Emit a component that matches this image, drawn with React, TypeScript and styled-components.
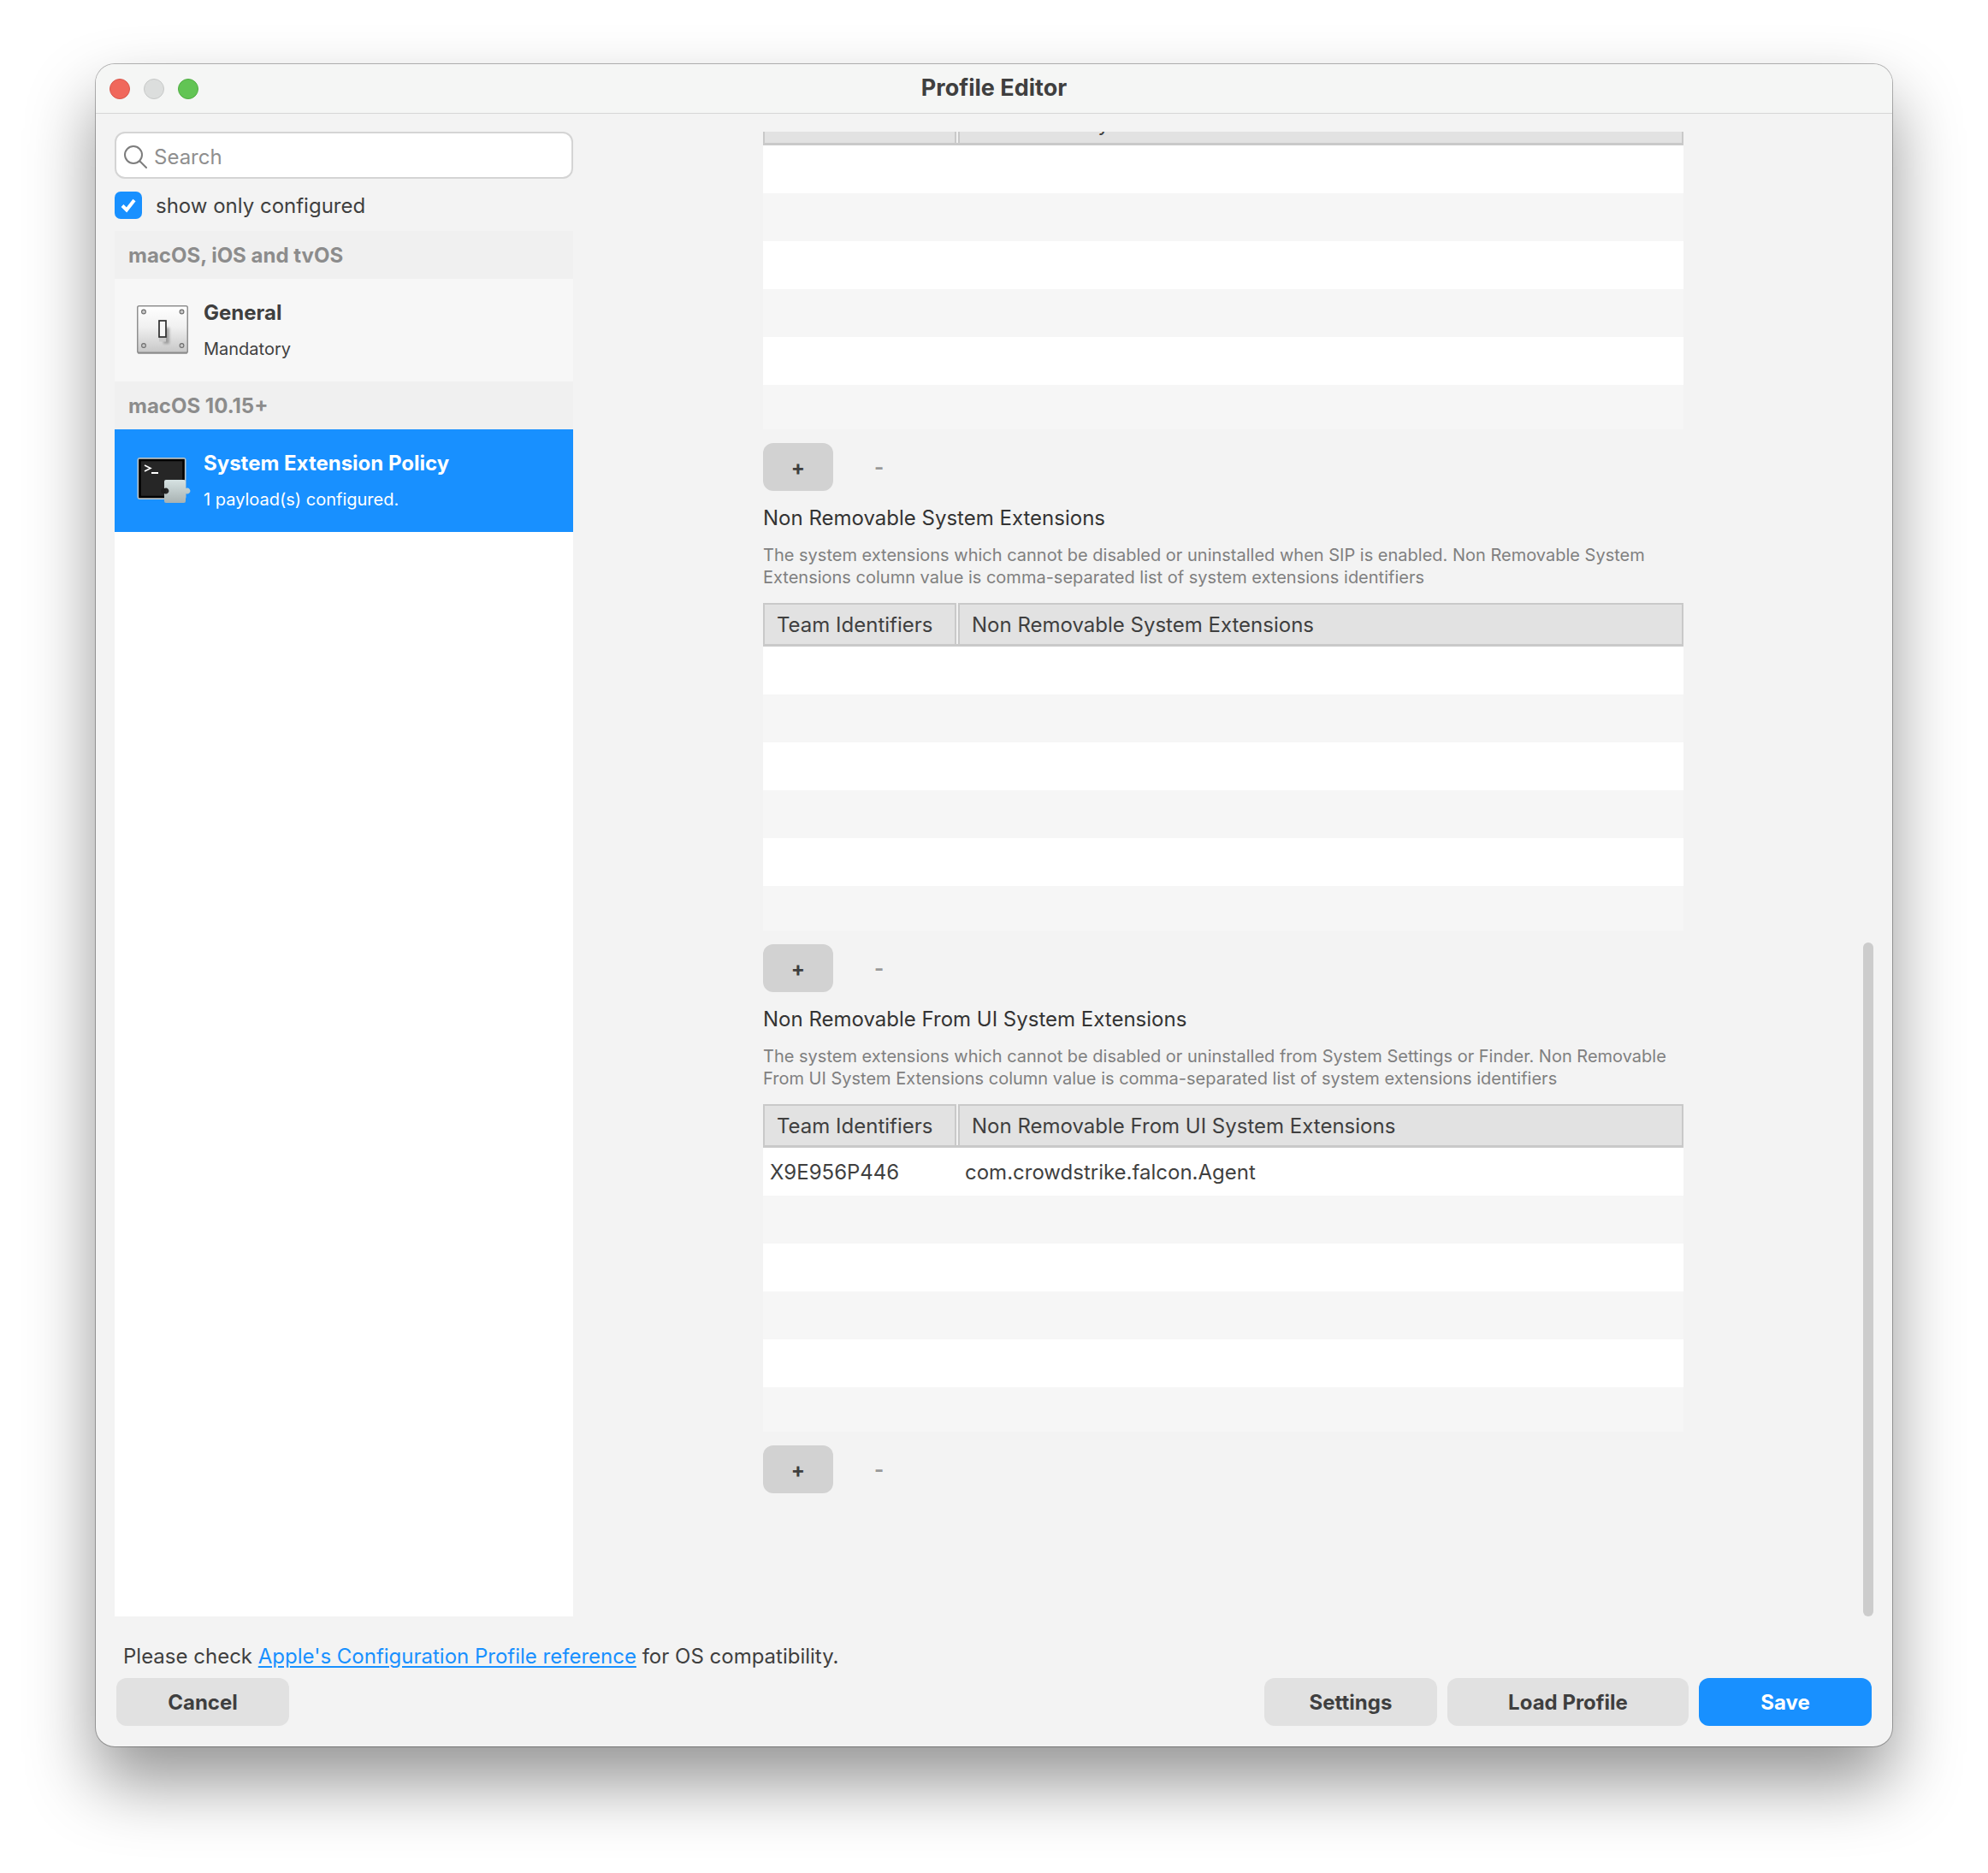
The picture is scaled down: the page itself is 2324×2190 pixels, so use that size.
import React from 'react';
import styled, { createGlobalStyle } from 'styled-components';

const sections = [
    {
        title: 'Non Removable System Extensions',
        description: [
            'The system extensions which cannot be disabled or uninstalled when SIP is enabled. Non Removable System',
            'Extensions column value is comma-separated list of system extensions identifiers',
        ],
        rows: [],
    },
    {
        title: 'Non Removable From UI System Extensions',
        description: [
            'The system extensions which cannot be disabled or uninstalled from System Settings or Finder. Non Removable',
            'From UI System Extensions column value is comma-separated list of system extensions identifiers',
        ],
        rows: [['X9E956P446', 'com.crowdstrike.falcon.Agent']],
    },
];

function SwitchIcon() {
    return (
        <IconSvg viewBox="0 0 60 58">
            <defs>
                <linearGradient id="plate" x1="0" y1="0" x2="0" y2="1">
                    <stop offset="0" stopColor="#ffffff" />
                    <stop offset="0.45" stopColor="#f0f0f0" />
                    <stop offset="1" stopColor="#c6c6c6" />
                </linearGradient>
                <filter id="toggleShadow" x="-50%" y="-50%" width="200%" height="200%">
                    <feGaussianBlur stdDeviation="1.800" />
                </filter>
            </defs>
            <rect x="0.75" y="0.75" width="58.500" height="55" rx="2" fill="url(#plate)" stroke="#8f8f8f" strokeWidth="1.500" />
            <rect x="1" y="54.500" width="58" height="2" fill="#8c8c8c" />
            {[[8, 7.500], [52.500, 7.500], [8, 47], [52.500, 47]].map(([cx, cy]) => (
                <circle key={`${cx}-${cy}`} cx={cx} cy={cy} r="2.400" fill="#c8c8c8" stroke="#6d6d6d" strokeWidth="1.100" />
            ))}
            <rect x="31" y="26" width="7" height="19" fill="#777" opacity="0.6" filter="url(#toggleShadow)" />
            <rect x="26" y="30" width="8" height="12.500" fill="#c9c9c9" />
            <rect x="26" y="18" width="8" height="19" fill="#f6f6f6" stroke="#2e2e2e" strokeWidth="1.700" />
        </IconSvg>
    );
}

function TerminalIcon() {
    return (
        <IconSvg viewBox="0 -2 60 58">
            <defs>
                <linearGradient id="piece" x1="0" y1="0" x2="0" y2="1">
                    <stop offset="0" stopColor="#d6e2e2" />
                    <stop offset="1" stopColor="#a8b2b2" />
                </linearGradient>
            </defs>
            <rect x="1.500" y="1" width="55" height="47" rx="2" fill="#262626" stroke="#b9c3c8" strokeWidth="2" />
            <rect x="3.500" y="3" width="51" height="43" fill="none" stroke="#000" strokeWidth="2.500" />
            <path d="M9 9l7 3.500-7 3.500" fill="none" stroke="#fff" strokeWidth="1.600" />
            <rect x="17" y="17" width="8" height="2" fill="#fff" />
            <path
                d="M32 28a2 2 0 0 1 2-2h21a2 2 0 0 1 2 2v8a3.500 3.500 0 1 1 0 6v9a2 2 0 0 1-2 2H34a2 2 0 0 1-2-2v-9a3.500 3.500 0 1 0 0-6z"
                fill="url(#piece)"
            />
            <circle cx="31" cy="39" r="3" fill="#1d1d1d" />
        </IconSvg>
    );
}

function Table({ title, rows }: { title: string; rows: string[][] }) {
    const cells = [0, 1, 2, 3, 4, 5];
    return (
        <div>
            <TableHeader>
                <HeaderCell>Team Identifiers</HeaderCell>
                <HeaderCell>{title}</HeaderCell>
            </TableHeader>
            {cells.map((i) => (
                <TableRow key={i} $odd={i % 2 === 1} $last={i === 5}>
                    <TeamCell>{rows[i]?.[0]}</TeamCell>
                    <ValueCell>{rows[i]?.[1]}</ValueCell>
                </TableRow>
            ))}
        </div>
    );
}

function AddRemove() {
    return (
        <Actions>
            <AddButton>+</AddButton>
            <RemoveButton>-</RemoveButton>
        </Actions>
    );
}

export default function App() {
    return (
        <Page>
            <GlobalStyle />
            <Window>
                <TitleBar>
                    <Lights>
                        <Light $color="#f0685c" $edge="#d9574c" />
                        <Light $color="#dcdedd" $edge="#c6c8c7" />
                        <Light $color="#62c454" $edge="#50ad43" />
                    </Lights>
                    <WindowTitle>Profile Editor</WindowTitle>
                </TitleBar>
                <Body>
                    <Sidebar>
                        <SearchBox>
                            <svg width="28" height="28" viewBox="0 0 28 28" fill="none" stroke="#7d7d7d" strokeWidth="2">
                                <circle cx="12" cy="12" r="10" />
                                <path d="M19.500 19.500L27 27" strokeLinecap="round" />
                            </svg>
                            <SearchText>Search</SearchText>
                        </SearchBox>
                        <CheckRow>
                            <CheckBox>
                                <svg width="20" height="18" viewBox="0 0 20 18" fill="none" stroke="#fff" strokeWidth="4">
                                    <path d="M3 9.500l5 5L17 3" />
                                </svg>
                            </CheckBox>
                            <span>show only configured</span>
                        </CheckRow>
                        <List>
                            <GroupHeader>macOS, iOS and tvOS</GroupHeader>
                            <ListItem>
                                <SwitchIcon />
                                <ItemText>
                                    <ItemTitle>General</ItemTitle>
                                    <ItemSub>Mandatory</ItemSub>
                                </ItemText>
                            </ListItem>
                            <GroupHeader>macOS 10.15+</GroupHeader>
                            <ListItem $selected>
                                <TerminalIcon />
                                <ItemText>
                                    <ItemTitle>System Extension Policy</ItemTitle>
                                    <ItemSub>1 payload(s) configured.</ItemSub>
                                </ItemText>
                            </ListItem>
                        </List>
                    </Sidebar>
                    <Main>
                        <ScrollContent>
                            <Table title="Removable System Extensions" rows={[]} />
                            <AddRemove />
                            {sections.map((section) => (
                                <section key={section.title}>
                                    <SectionTitle>{section.title}</SectionTitle>
                                    <Description>
                                        {section.description.map((line) => (
                                            <div key={line}>{line}</div>
                                        ))}
                                    </Description>
                                    <Table title={section.title} rows={section.rows} />
                                    <AddRemove />
                                </section>
                            ))}
                        </ScrollContent>
                        <ScrollThumb />
                    </Main>
                </Body>
                <Footer>
                    <Note>
                        Please check <NoteLink href="#">Apple's Configuration Profile reference</NoteLink> for OS compatibility.
                    </Note>
                    <ButtonRow>
                        <Button>Cancel</Button>
                        <RightButtons>
                            <Button>Settings</Button>
                            <Button $wide>Load Profile</Button>
                            <Button $primary>Save</Button>
                        </RightButtons>
                    </ButtonRow>
                </Footer>
            </Window>
        </Page>
    );
}

const GlobalStyle = createGlobalStyle`
    html, body {
        margin: 0;
        padding: 0;
        background: #fff;
    }
    * {
        box-sizing: border-box;
    }
`;
const Page = styled.div`
    width: 2324px;
    height: 2190px;
    padding: 75px 112px 0;
    font-family: Inter, "Liberation Sans", sans-serif;
    color: #3f3f3f;
    overflow: hidden;
`;
const Window = styled.div`
    display: flex;
    flex-direction: column;
    width: 2100px;
    height: 1967px;
    background: #f3f3f3;
    border-radius: 22px;
    box-shadow: 0 0 0 1px rgba(0, 0, 0, 0.28), 0 42px 80px rgba(0, 0, 0, 0.42);
    overflow: hidden;
`;
const TitleBar = styled.div`
    position: relative;
    display: flex;
    align-items: center;
    justify-content: center;
    flex: none;
    height: 58px;
    background: #f5f6f5;
    border-bottom: 1px solid #d6d6d6;
`;
const Lights = styled.div`
    position: absolute;
    left: 16px;
    top: 17px;
    display: flex;
    gap: 16px;
`;
const Light = styled.span<{ $color: string; $edge: string }>`
    width: 24px;
    height: 24px;
    border-radius: 50%;
    background: ${(p) => p.$color};
    border: 1px solid ${(p) => p.$edge};
`;
const WindowTitle = styled.div`
    font-size: 27px;
    font-weight: 700;
    margin-top: -3px;
`;
const Body = styled.div`
    display: flex;
    flex: 1;
    min-height: 0;
    padding-left: 22px;
`;
const Sidebar = styled.div`
    display: flex;
    flex-direction: column;
    flex: none;
    width: 536px;
    padding-top: 21px;
`;
const SearchBox = styled.div`
    display: flex;
    align-items: center;
    gap: 8px;
    flex: none;
    height: 55px;
    padding: 3px 0 0 8px;
    background: #fff;
    border: 2px solid #d4d4d4;
    border-radius: 12px;
`;
const SearchText = styled.span`
    font-size: 24px;
    color: #8f8f8f;
`;
const CheckRow = styled.div`
    display: flex;
    align-items: center;
    gap: 16px;
    flex: none;
    height: 32px;
    margin: 15px 0 14px;
    font-size: 24px;
`;
const CheckBox = styled.div`
    display: flex;
    align-items: center;
    justify-content: center;
    width: 32px;
    height: 32px;
    background: #1890ff;
    border-radius: 7px;
`;
const List = styled.div`
    flex: 1;
    background: #fff;
`;
const GroupHeader = styled.div`
    display: flex;
    align-items: center;
    height: 56px;
    padding-left: 16px;
    background: #f0f0f0;
    font-size: 24px;
    font-weight: 700;
    color: #8c8c8c;
`;
const ListItem = styled.div<{ $selected?: boolean }>`
    display: flex;
    align-items: center;
    gap: 18px;
    height: 120px;
    padding-left: 26px;
    background: ${(p) => (p.$selected ? '#1890ff' : '#f7f7f7')};
    color: ${(p) => (p.$selected ? '#fff' : '#3f3f3f')};
`;
const IconSvg = styled.svg`
    flex: none;
    width: 60px;
    height: 58px;
    overflow: visible;
`;
const ItemText = styled.div`
    display: flex;
    flex-direction: column;
    gap: 12px;
    padding-top: 1px;
`;
const ItemTitle = styled.div`
    font-size: 24px;
    font-weight: 700;
    line-height: 30px;
`;
const ItemSub = styled.div`
    font-size: 20px;
    line-height: 30px;
`;
const Main = styled.div`
    position: relative;
    flex: 1;
    min-width: 0;
    margin-top: 21px;
    padding-left: 222px;
    overflow: hidden;
`;
const ScrollContent = styled.div`
    width: 1076px;
    margin-top: -35px;
`;
const ScrollThumb = styled.div`
    position: absolute;
    right: 22px;
    bottom: 0;
    width: 12px;
    height: 788px;
    background: #cccccc;
    border-radius: 6px;
`;
const TableHeader = styled.div`
    display: grid;
    grid-template-columns: 226px 1fr;
    height: 51px;
    background: #e2e2e2;
    border-bottom: 3px solid #c9c9c9;
`;
const HeaderCell = styled.div`
    display: flex;
    align-items: center;
    padding-left: 14px;
    font-size: 24px;
    border: 2px solid #c9c9c9;
    border-bottom: 0;
    & + & {
        border-left: 2px solid #c9c9c9;
        box-shadow: -2px 0 0 #f2f2f2;
        margin-left: 2px;
    }
`;
const TableRow = styled.div<{ $odd: boolean; $last: boolean }>`
    display: grid;
    grid-template-columns: 236px 1fr;
    align-items: center;
    height: ${(p) => (p.$last ? '52px' : '56px')};
    background: ${(p) => (p.$odd ? '#f6f6f6' : '#ffffff')};
    font-size: 24px;
`;
const TeamCell = styled.div`
    padding-left: 8px;
`;
const ValueCell = styled.div``;
const Actions = styled.div`
    display: flex;
    align-items: center;
    gap: 48px;
    margin-top: 16px;
`;
const AddButton = styled.div`
    display: flex;
    align-items: center;
    justify-content: center;
    width: 82px;
    height: 56px;
    background: #d2d2d2;
    border-radius: 12px;
    font-size: 24px;
    font-weight: 700;
`;
const RemoveButton = styled.div`
    font-size: 24px;
    font-weight: 700;
    color: #999;
`;
const SectionTitle = styled.div`
    margin-top: 16px;
    font-size: 24px;
    line-height: 32px;
    color: #333;
`;
const Description = styled.div`
    margin: 14px 0 17px;
    font-size: 20px;
    line-height: 26px;
    color: #808080;
`;
const Footer = styled.div`
    flex: none;
    height: 152px;
    padding: 32px 24px 0;
`;
const Note = styled.div`
    padding-left: 8px;
    font-size: 24px;
    line-height: 30px;
`;
const NoteLink = styled.a`
    color: #1890ff;
    text-decoration: underline;
    text-underline-offset: 3px;
`;
const ButtonRow = styled.div`
    display: flex;
    justify-content: space-between;
    margin-top: 10px;
`;
const RightButtons = styled.div`
    display: flex;
    gap: 12px;
`;
const Button = styled.div<{ $wide?: boolean; $primary?: boolean }>`
    display: flex;
    align-items: center;
    justify-content: center;
    width: ${(p) => (p.$wide ? '282px' : '202px')};
    height: 56px;
    background: ${(p) => (p.$primary ? '#1890ff' : '#e1e1e1')};
    color: ${(p) => (p.$primary ? '#fff' : '#3f3f3f')};
    border-radius: 12px;
    font-size: 24px;
    font-weight: 700;
`;
